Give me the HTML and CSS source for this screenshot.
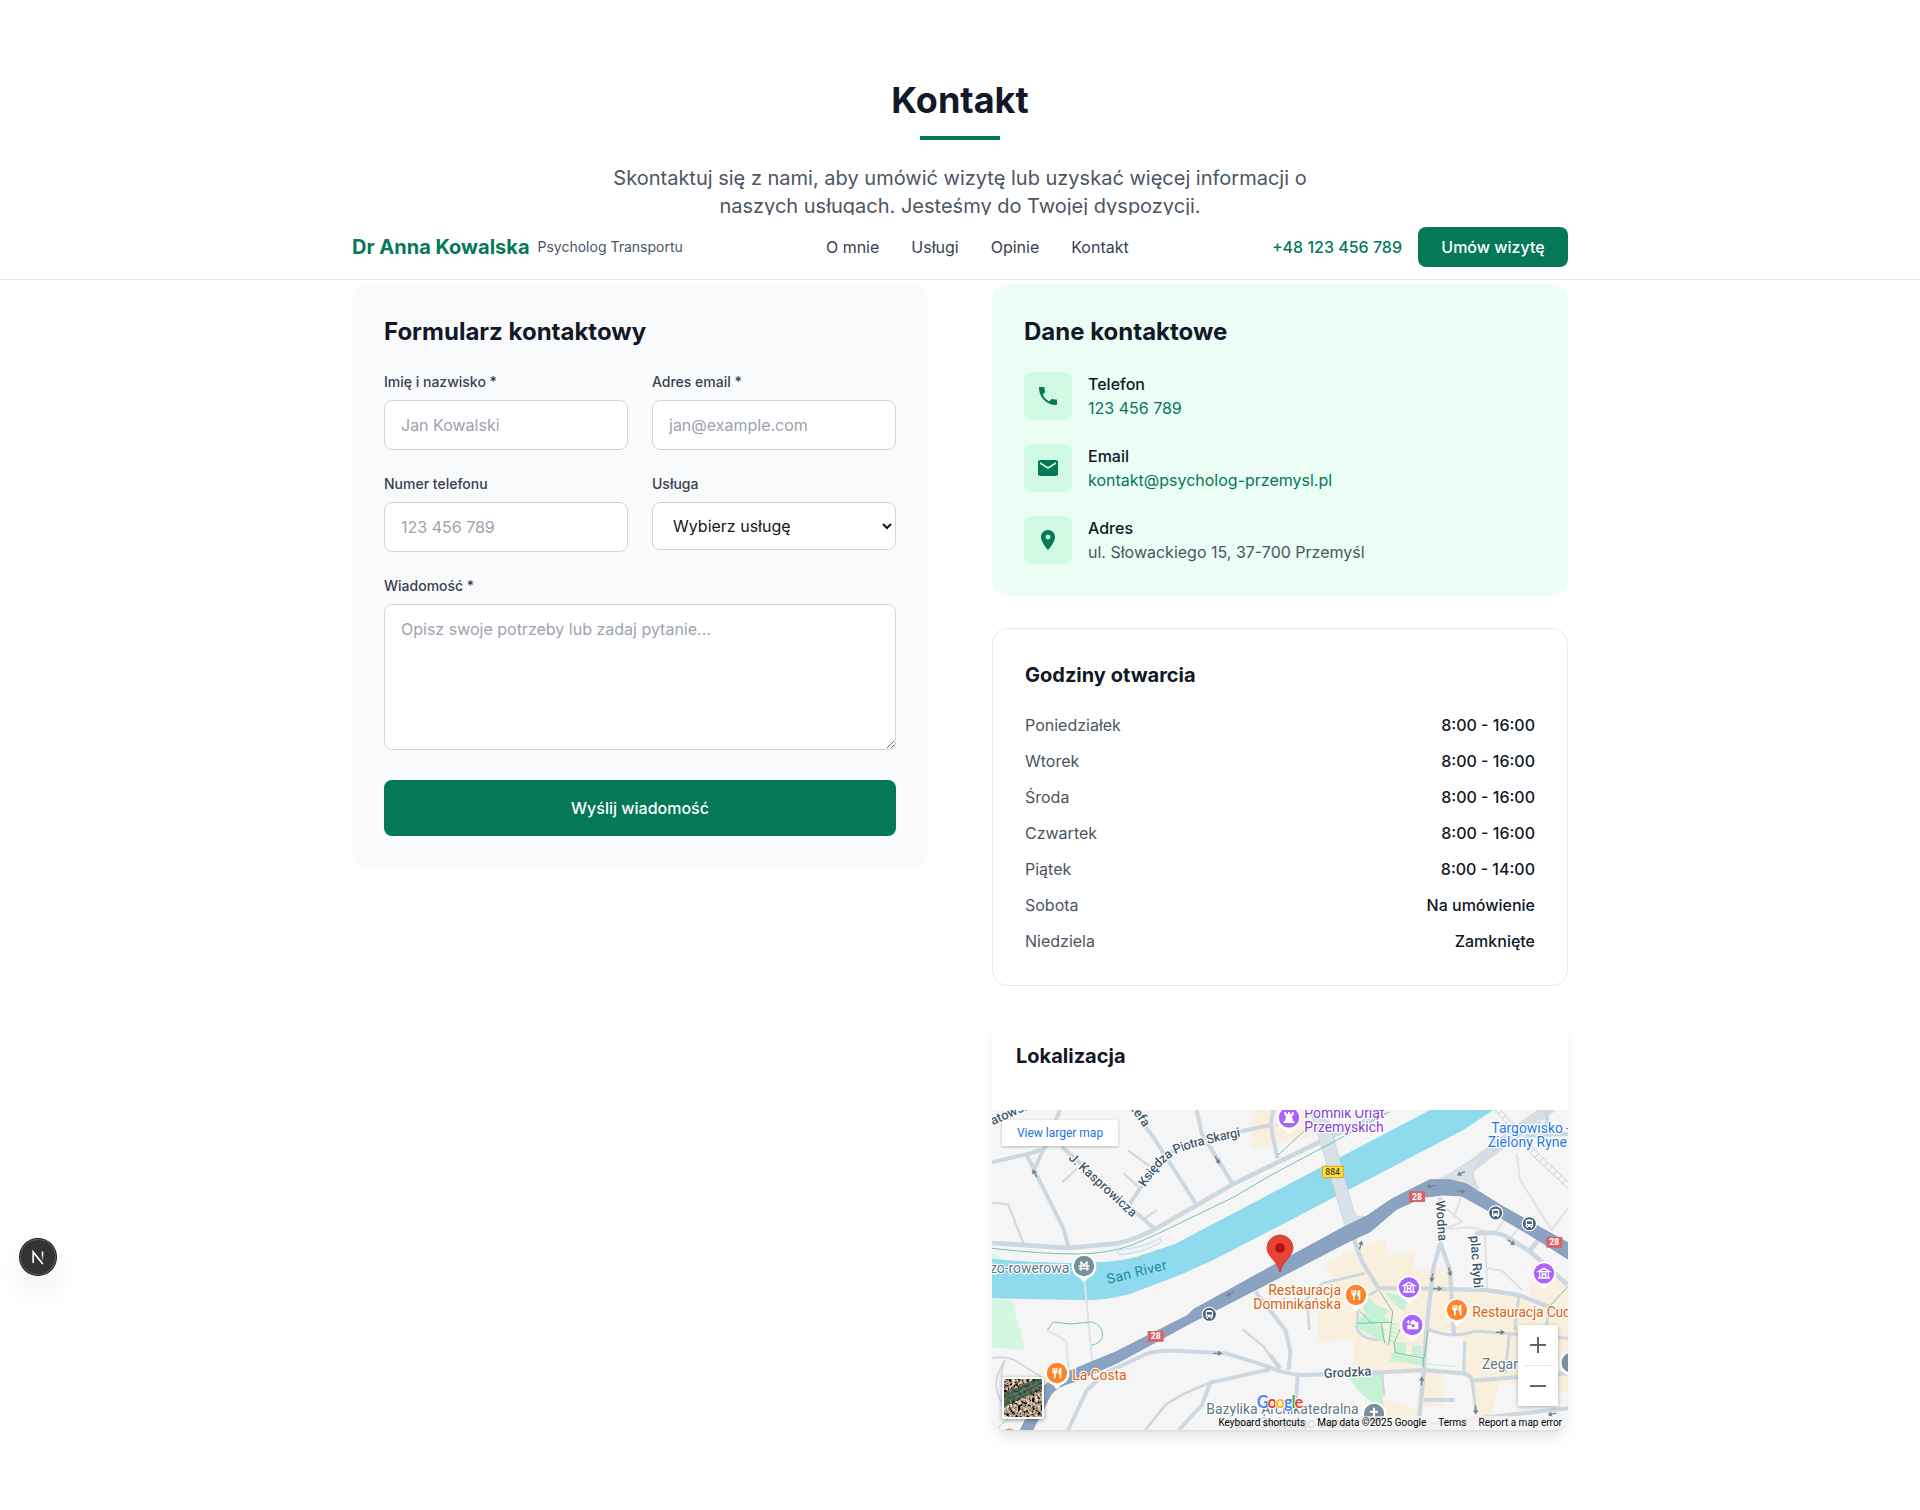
FILE: index.html
```html
<!DOCTYPE html>
<html lang="pl">
<head>
<meta charset="utf-8">
<title>Kontakt – Dr Anna Kowalska</title>
<link rel="stylesheet" href="styles.css">
</head>
<body>
<header class="site-header">
  <div class="header-inner">
    <div class="brand"><span class="brand-name">Dr Anna Kowalska</span><span class="brand-role">Psycholog Transportu</span></div>
    <nav class="nav"><a>O mnie</a><a>Usługi</a><a>Opinie</a><a>Kontakt</a></nav>
    <div class="header-cta"><a class="header-phone">+48 123 456 789</a><a class="header-button">Umów wizytę</a></div>
  </div>
</header>

<main class="contact">
  <div class="intro">
    <h2>Kontakt</h2>
    <div class="intro-rule"></div>
    <p>Skontaktuj się z nami, aby umówić wizytę lub uzyskać więcej informacji o naszych usługach. Jesteśmy do Twojej dyspozycji.</p>
  </div>

  <div class="columns">
    <form class="form-card">
      <h3>Formularz kontaktowy</h3>
      <div class="form-grid">
        <label class="field"><span>Imię i nazwisko *</span><input type="text" placeholder="Jan Kowalski"></label>
        <label class="field"><span>Adres email *</span><input type="email" placeholder="jan@example.com"></label>
        <label class="field"><span>Numer telefonu</span><input type="tel" placeholder="123 456 789"></label>
        <label class="field"><span>Usługa</span><select><option>Wybierz usługę</option></select></label>
        <label class="field field-wide"><span>Wiadomość *</span><textarea rows="5" placeholder="Opisz swoje potrzeby lub zadaj pytanie..."></textarea></label>
      </div>
      <button type="button" class="submit">Wyślij wiadomość</button>
    </form>

    <div class="side">
      <section class="info-card">
        <h3>Dane kontaktowe</h3>
        <div class="info-list">
          <div class="info-row">
            <div class="info-icon"><svg viewBox="0 0 24 24"><path d="M6.62 10.79c1.44 2.83 3.76 5.14 6.59 6.59l2.2-2.2c.27-.27.67-.36 1.02-.24 1.12.37 2.33.57 3.57.57.55 0 1 .45 1 1V20c0 .55-.45 1-1 1-9.39 0-17-7.61-17-17 0-.55.45-1 1-1h3.5c.55 0 1 .45 1 1 0 1.25.2 2.45.57 3.57.11.35.03.74-.25 1.02l-2.2 2.2z"/></svg></div>
            <div><p class="info-label">Telefon</p><p class="info-link">123 456 789</p></div>
          </div>
          <div class="info-row">
            <div class="info-icon"><svg viewBox="0 0 24 24"><path d="M20 4H4c-1.1 0-1.99.9-1.99 2L2 18c0 1.1.9 2 2 2h16c1.1 0 2-.9 2-2V6c0-1.1-.9-2-2-2zm0 4l-8 5-8-5V6l8 5 8-5v2z"/></svg></div>
            <div><p class="info-label">Email</p><p class="info-link">kontakt@psycholog-przemysl.pl</p></div>
          </div>
          <div class="info-row">
            <div class="info-icon"><svg viewBox="0 0 24 24"><path d="M12 2C8.13 2 5 5.13 5 9c0 5.25 7 13 7 13s7-7.75 7-13c0-3.87-3.13-7-7-7zm0 9.5a2.5 2.5 0 0 1 0-5 2.5 2.5 0 0 1 0 5z"/></svg></div>
            <div><p class="info-label">Adres</p><p class="info-text">ul. Słowackiego 15, 37-700 Przemyśl</p></div>
          </div>
        </div>
      </section>

      <section class="hours-card">
        <h4>Godziny otwarcia</h4>
        <dl class="hours">
          <div><dt>Poniedziałek</dt><dd>8:00 - 16:00</dd></div>
          <div><dt>Wtorek</dt><dd>8:00 - 16:00</dd></div>
          <div><dt>Środa</dt><dd>8:00 - 16:00</dd></div>
          <div><dt>Czwartek</dt><dd>8:00 - 16:00</dd></div>
          <div><dt>Piątek</dt><dd>8:00 - 14:00</dd></div>
          <div><dt>Sobota</dt><dd>Na umówienie</dd></div>
          <div><dt>Niedziela</dt><dd>Zamknięte</dd></div>
        </dl>
      </section>

      <section class="map-card">
        <h4>Lokalizacja</h4>
        <div class="map">
          <svg class="map-canvas" viewBox="0 0 1728 960">
            <defs>
              <g id="pin-base"><path d="M0 48c-5 0-7-6-11-11A37 37 0 1 1 11 37C7 42 5 48 0 48z" fill="#fff"/></g>
              <g id="fork" fill="#fff"><path d="M-14-15h3.500v9h2v-9h4v9h2v-9h3.500V-4q0 5-5 6v14h-5V2q-5-1-5-6z"/><path d="M13-16v32H8V4H4V-6q0-9 9-10z"/></g>
              <g id="museum" fill="none" stroke="#fff" stroke-width="4"><path d="M-17-5L0-15 17-5zM-13-3v16M13-3v16M-18 14h36M-5 12V0l5 5 5-5v12"/></g>
              <g id="bus"><circle r="23" fill="#fff"/><circle r="19.500" fill="#4a6275"/><path d="M-11-8q0-5 11-5t11 5V9H8v4H4V9h-8v4h-4V9h-3z" fill="#fff"/><path d="M-7.500-7h15v8h-15z" fill="#4a6275"/><path d="M-7 4h3v3h-3zM4 4h3v3H4z" fill="#4a6275"/></g>
              <path id="arrow" d="M-13-2H1v-6L14 0 1 8V2h-14z" fill="#75828e"/>
              <path id="skargi" d="M460 233Q503 160 552 132Q600 108 790 70"/>
            </defs>
            <rect width="1728" height="960" fill="#f5f5f5"/>
            <!-- built-up blocks -->
            <g fill="#f8efdd">
              <path d="M784 0H950L965 80 834 105 776 118z"/>
              <g transform="translate(834 0)">
                <path d="M160 460L345 382 355 435 430 427V475L530 478 555 540 740 562 830 598 894 605V850L690 815 660 930 600 960H340L330 900 250 790 248 770 255 690 140 697 150 560 190 515z"/>
                <path d="M785 515L894 500V600L830 590 778 560z"/>
              </g>
            </g>
            <g fill="#f5f5f5" transform="translate(834 0)"><path d="M480 672L550 660 585 695 578 782 470 772zM335 795L455 790 440 895 350 870zM520 792L598 802 608 890 520 885zM460 890L600 885 640 925 450 940z"/></g>
            <!-- green areas -->
            <g fill="#d3f8e2"><path d="M0 568L60 568 99 718 0 713z"/><path d="M0 432q25 2 28 18H0z"/></g>
            <g fill="#c5f1d6">
              <path d="M1110 575L1135 565Q1150 590 1190 600L1178 622 1196 636 1155 640 1180 660 1170 675 1183 697 1160 690 1098 655V630L1120 612z"/><path d="M1180 548Q1226 548 1245 575L1236 603Q1200 580 1180 548z"/>
              <path d="M1212 695L1244 700 1240 735 1206 728zM1262 705L1290 708 1290 740 1258 735zM1200 728L1296 750V768L1196 748zM1072 805L1168 790 1174 890Q1120 880 1072 805z"/>
            </g>
            <path d="M1192 752L1390 770" fill="none" stroke="#c5f1d6" stroke-width="4"/>
            <path d="M1208 640l-12 60" fill="none" stroke="#c5f1d6" stroke-width="20" stroke-dasharray="7 5"/>
            <!-- river -->
            <path d="M0 447Q200 464 294 457Q390 454 434 440L549 402 834 252 1314 0H1504L1414 60 834 362 664 450 564 495 414 552Q330 574 264 570L0 565z" fill="#90daed"/>
            <!-- footways and railway -->
            <g fill="none" stroke="#dfe1e4" stroke-width="6">
              <path d="M277 510L302 767M165 660L222 693 230 780M1574 130L1584 210 1679 360L1728 295M1362 295L1410 335 1360 357 1440 352 1500 372M1385 325L1408 260M1478 365L1486 535M1486 475L1530 482 1590 540M1505 375L1535 330M1555 385L1590 340M1535 330L1640 390M874 20L840 60"/>
              <path d="M1505 -5L1630 145 1728 235M1518 -10L1642 133 1728 215" stroke="#cfd3d8" stroke-width="3"/>
              <path d="M1511 -10L1636 139 1728 225" stroke="#cfd3d8" stroke-width="16" stroke-dasharray="3 16"/>
            </g>
            <!-- streets -->
            <g fill="none" stroke="#cdd7e0" stroke-width="12" stroke-linejoin="round">
              <path d="M0 157L114 130 154 118 190 80M204 0L165 95 126 180M104 135L214 355 229 410M209 110L489 358"/>
              <path d="M0 399L229 414 379 400Q440 385 494 355L724 222 974 100 1180 5" stroke-width="14"/>
              <path d="M419 0L480 75 614 285M614 0L629 70 721 220M414 280L454 220 524 135 564 110 764 60 839 45M844 0L836 45 856 145"/>
              <path d="M409 122L474 170M394 190L439 230M211 217L256 175M494 300L455 328M0 278L49 283 94 400" stroke-width="6"/>
              <path d="M0 745Q30 738 64 748L155 805M38 750Q10 800 12 830 18 870 40 890M38 750L28 790 40 860" stroke-width="5"/>
              <path d="M752 658L815 710 860 775" stroke-width="7"/>
              <path d="M790 545L880 660 895 725 890 780M834 735L865 775"/>
              <path d="M228 960L285 840 340 790 462 732Q500 720 560 723L700 730Q740 740 834 772 870 790 930 795L1120 790 1290 780 1410 790Q1438 795 1440 812L1728 790"/>
              <path d="M460 960L520 885Q570 850 650 820" stroke-width="8"/>
              <path d="M560 960L630 885 655 818 834 778M917 795L912 870M1295 870H1388M1290 945L1500 920 1728 895"/>
              <path d="M1170 790L1176 855" stroke-width="7"/>
              <path d="M1085 385L1110 455 1160 535 1280 535 1480 540 1580 555 1670 590 1728 610" stroke-width="13"/>
              <path d="M1160 540L1100 570 1094 650Q1100 685 1160 690M1118 490L990 520 945 565 952 660" stroke-width="8"/>
              <path d="M1345 262V400L1325 470 1304 650 1292 820 1278 960M1345 400L1374 480 1386 675" stroke-width="13"/>
              <path d="M1304 655Q1380 690 1450 663L1728 685M1418 695L1415 790M1552 670L1540 790M1580 560L1568 660M1670 590L1664 650M1440 810L1452 905" stroke-width="9"/>
              <path d="M1450 372Q1520 360 1550 385L1615 425 1728 525M1615 420L1640 390" stroke-width="14"/>
              <path d="M1380 205L1450 160 1600 45 1680 -10" stroke-width="34" stroke="#d5dde5"/>
              <path d="M1728 72L1600 78M1665 0V60"/>
            </g>
            <path d="M950 -10L978 75 1060 350 1085 345 1128 320 1094 318 1084 300 1000 -10z" fill="#d8e0e8" stroke="#c2cdd7" stroke-width="2"/>
            <path d="M1330 210L1440 160 1480 120Q1440 168 1445 200L1465 240 1400 225z" fill="#d8e0e8"/>
            <path d="M1455 235Q1438 200 1446 180 1465 145 1520 112" fill="none" stroke="#c2cdd7" stroke-width="2"/>
            <!-- national road 28 -->
            <g stroke="#718eb5" stroke-width="2" fill="#8ba3c1" stroke-linejoin="round">
              <path d="M82 965L150 835Q185 795 230 784L370 726 585 617 605 598 864 455 1054 352 1124 318 1199 267 1314 209 1374 209 1424 222 1534 290 1740 405V455L1614 375 1524 322 1409 258 1354 255 1294 262 1214 298 1134 366 1074 393 864 502 640 617 595 640 378 758 245 816Q195 828 176 855L120 965z"/>
            </g>
            <!-- cycle and foot paths -->
            <g fill="none" stroke="#72c5a5" stroke-width="3">
              <path d="M0 415Q160 433 264 432 350 430 420 405L500 370 724 262 834 197 1194 5M858 135L940 60M166 660L184 636 234 642 300 636Q330 645 332 675 330 700 298 706"/>
              <path d="M1164 545L1202 605 1190 705M1096 640L1200 637M1105 605L1140 640M1168 640L1178 700M1225 655L1206 700 1210 728 1296 745 1308 660M1294 745V770M1728 530L1670 592"/>
              <path d="M20 950L90 890" stroke-dasharray="8 6"/>
            </g>
            <path d="M376 420Q450 415 506 384L508 396Q450 432 380 434z" fill="#edf3fa" stroke="#ccd7e3" stroke-width="3"/>
            <!-- one-way arrows -->
            <use href="#arrow" transform="translate(128 190) rotate(-120)"/><use href="#arrow" transform="translate(676 150) rotate(58)"/>
            <use href="#arrow" transform="translate(714 552) rotate(152)"/><use href="#arrow" transform="translate(677 730)"/>
            <use href="#arrow" transform="translate(1407 190) rotate(152)"/><use href="#arrow" transform="translate(1317 228) rotate(170)"/>
            <use href="#arrow" transform="translate(1408 244) rotate(8)"/><use href="#arrow" transform="translate(1558 397) rotate(35)"/>
            <use href="#arrow" transform="translate(1106 405) rotate(-75)"/><use href="#arrow" transform="translate(1320 503) rotate(98)"/>
            <use href="#arrow" transform="translate(1373 485) rotate(75)"/><use href="#arrow" transform="translate(1337 536)"/>
            <use href="#arrow" transform="translate(1525 667)"/><use href="#arrow" transform="translate(1289 813) rotate(-88)"/>
            <use href="#arrow" transform="translate(1451 900) rotate(88)"/><use href="#arrow" transform="translate(1680 912) rotate(168)"/>
            <!-- shields -->
            <g class="shield">
              <path d="M1251 244h48v32h-48zM1663 381h48v32h-48zM467 663h48v32h-48z" fill="#da6262"/>
              <text x="1275" y="269">28</text><text x="1687" y="406">28</text><text x="491" y="688">28</text>
              <path d="M991 169h63v34h-63z" fill="#fddc43" stroke="#d5ac13" stroke-width="3"/><text class="dark" x="1022" y="195">884</text>
            </g>
            <use href="#bus" x="1511" y="309"/><use href="#bus" x="1612" y="341"/><use href="#bus" x="652" y="613"/>
            <!-- labels -->
            <g class="street">
              <text transform="translate(227 146) rotate(42.500)" textLength="262">J. Kasprowicza</text>
              <text textLength="340"><textPath href="#skargi" textLength="340">Księdza Piotra Skargi</textPath></text>
              <text transform="translate(412 -8) rotate(55)">zefa</text>
              <text transform="translate(2 46) rotate(-24)">atowska</text>
              <text transform="translate(1331 272) rotate(86)" textLength="122">Wodna</text>
              <text transform="translate(1435 378) rotate(86)" textLength="157">plac Rybi</text>
              <text transform="translate(996 804) rotate(-3)" textLength="143">Grodzka</text>
            </g>
            <g class="poi">
              <text x="-6" y="488" class="slate" textLength="238">zo-rowerowa</text>
              <text transform="translate(348 522) rotate(-14)" class="water" textLength="184">San River</text>
              <text x="937" y="24" class="purple" textLength="240">Pomnik Orląt</text><text x="937" y="66" class="purple" textLength="238">Przemyskich</text>
              <text x="1498" y="69" class="blue" textLength="215">Targowisko</text><text x="1487" y="111" class="blue" textLength="238">Zielony Ryne</text><text x="1722" y="69" class="blue">-</text>
              <text x="1047" y="555" class="food end" textLength="218">Restauracja</text><text x="1047" y="597" class="food end" textLength="263">Dominikańska</text>
              <text x="1441" y="621" class="food" textLength="318">Restauracja Cuda</text>
              <text x="241" y="810" class="food" textLength="163">La Costa</text>
              <text x="1470" y="777" class="slate">Zegar</text>
              <text x="643" y="912" class="slate" textLength="457">Bazylika Archikatedralna</text>
              <text x="730" y="954" class="slate" textLength="370">pw. Świętego Jana...</text>
            </g>
            <!-- places -->
            <g transform="translate(891 23)"><use href="#pin-base"/><circle r="30.500" fill="#ac63fb"/><path d="M-14-17h6v6h5v-6h6v6h5v-6h6v9l-5 3 3 15h4v6h-32v-6h4l3-15-5-3z" fill="#fff"/></g>
            <g transform="translate(276 468)"><use href="#pin-base"/><circle r="30.500" fill="#78909c"/><path d="M-16 8h32M-16 0h32M-9-14V14M9-14V14M-9-12L0-3 9-12" fill="none" stroke="#fff" stroke-width="4"/></g>
            <g transform="translate(1092 555)"><use href="#pin-base"/><circle r="30.500" fill="#ff8328"/><use href="#fork"/></g>
            <g transform="translate(1395 600)"><use href="#pin-base"/><circle r="30.500" fill="#ff8328"/><use href="#fork"/></g>
            <g transform="translate(195 789)"><use href="#pin-base"/><circle r="30.500" fill="#ff8328"/><use href="#fork"/></g>
            <g transform="translate(51 986)"><use href="#pin-base"/><circle r="30.500" fill="#ff8328"/></g>
            <g transform="translate(1251 532)"><use href="#pin-base"/><circle r="30.500" fill="#ac63fb"/><use href="#museum"/></g>
            <g transform="translate(1656 490)"><use href="#pin-base"/><circle r="30.500" fill="#ac63fb"/><use href="#museum"/></g>
            <g transform="translate(1261 645)"><use href="#pin-base"/><circle r="30.500" fill="#ac63fb"/><path d="M-15 0V13h33V-9h-8l-3-5h-8l-3 5h-1v9z" fill="#fff"/><path d="M-18-9h12M-12-15v12" stroke="#fff" stroke-width="3"/><circle cx="2" cy="2" r="5" fill="#ac63fb"/></g>
            <g transform="translate(1146 912)"><use href="#pin-base"/><circle r="30.500" fill="#78909c"/><path d="M0-19V17M-12-7h24" stroke="#fff" stroke-width="6"/></g>
            <g transform="translate(1739 758)"><use href="#pin-base"/><circle r="30.500" fill="#78909c"/></g>
            <path d="M864 486C857 453 825 440 825 414a39 39 0 0 1 78 0C903 440 871 453 864 486z" fill="#ea4335" stroke="#c5221f" stroke-width="2"/><circle cx="864" cy="414" r="15" fill="#b31412"/>
            <text class="google" x="794" y="894" textLength="140"><tspan fill="#4285f4">G</tspan><tspan fill="#ea4335">o</tspan><tspan fill="#fbbc04">o</tspan><tspan fill="#4285f4">g</tspan><tspan fill="#34a853">l</tspan><tspan fill="#ea4335">e</tspan></text>
          </svg>
          <a class="map-larger">View larger map</a>
          <svg class="map-satellite" viewBox="0 0 38 38">
            <defs><filter id="ground" x="0" y="0" width="1" height="1"><feTurbulence type="fractalNoise" baseFrequency=".35" numOctaves="3" seed="4"/><feColorMatrix values="2.2 0 0 0 -.72  1.9 .2 0 0 -.76  1.7 .2 0 0 -.72  0 0 0 0 1"/></filter></defs>
            <rect width="38" height="38" filter="url(#ground)"/>
            <path d="M0 14L38-3V10L0 28z" fill="#2f5440" opacity=".8"/><path d="M0 20L38 2M0 25L38 6" stroke="#769477" stroke-width="1" opacity=".6"/>
          </svg>
          <div class="map-zoom">
            <svg viewBox="0 0 40 40"><path d="M12 20h16M20 12v16"/></svg>
            <svg viewBox="0 0 40 40"><path d="M12 20h16"/></svg>
          </div>
          <div class="map-legal"><span>Keyboard shortcuts</span><span>Map data ©2025 Google</span><span>Terms</span><span>Report a map error</span></div>
        </div>
      </section>
    </div>
  </div>
</main>

<div class="dev-badge"><svg viewBox="0 0 36 36"><defs><linearGradient id="fade" x1="0" y1="0" x2="0" y2="1"><stop offset=".3" stop-color="#fff"/><stop offset="1" stop-color="#fff" stop-opacity="0"/></linearGradient></defs><path d="M13.200 24V13L22.800 25" fill="none" stroke="#fff" stroke-width="1.700"/><rect x="21.700" y="12.500" width="1.600" height="9.500" fill="url(#fade)"/></svg></div>
</body>
</html>
```
FILE: styles.css
```css
* { box-sizing: border-box; margin: 0; padding: 0; }
body { font-family: Inter, "Liberation Sans", sans-serif; font-size: 16px; line-height: 24px; color: #171717; background: #fff; }
h2, h3, h4 { color: #111827; font-weight: 700; }

.site-header { position: absolute; top: 215px; left: 0; right: 0; z-index: 5; height: 65px; background: #fff; border-bottom: 1px solid #e5e7eb; }
.header-inner { max-width: 1216px; height: 64px; margin: 0 auto; display: flex; align-items: center; justify-content: space-between; }
.brand { display: flex; align-items: center; gap: 8px; }
.brand-name { font-size: 20px; line-height: 28px; font-weight: 700; color: #047857; }
.brand-role { font-size: 14px; line-height: 20px; color: #4b5563; }
.nav { display: flex; gap: 32px; color: #374151; }
.header-cta { display: flex; align-items: center; gap: 16px; }
.header-phone { font-weight: 500; color: #047857; }
.header-button { width: 150px; height: 40px; border-radius: 8px; background: #047857; color: #fff; font-weight: 500; line-height: 40px; text-align: center; }

.contact { padding: 80px 0; max-width: 1216px; margin: 0 auto; }
.intro { text-align: center; margin-bottom: 64px; }
.intro h2 { font-size: 36px; line-height: 40px; }
.intro-rule { width: 80px; height: 4px; margin: 16px auto 24px; background: #047857; }
.intro p { max-width: 768px; margin: 0 auto; font-size: 20px; line-height: 28px; color: #4b5563; }
.columns { display: grid; grid-template-columns: 1fr 1fr; gap: 64px; align-items: start; }
h3 { font-size: 24px; line-height: 32px; margin-bottom: 24px; }
h4 { font-size: 20px; line-height: 28px; }

.form-card { padding: 32px; border-radius: 16px; background: #f9fafb; }
.form-grid { display: grid; grid-template-columns: 1fr 1fr; gap: 24px; }
.field { display: block; }
.field span { display: block; margin-bottom: 8px; font-size: 14px; line-height: 20px; font-weight: 500; color: #374151; }
.field-wide { grid-column: span 2; }
input, select, textarea { display: block; width: 100%; padding: 12px 16px; border: 1px solid #d1d5db; border-radius: 8px; background: #fff; font: inherit; color: #171717; }
input { height: 50px; }
select { height: 48px; }
textarea { height: 146px; }
::placeholder { color: #9ca3af; opacity: 1; }
.submit { display: block; width: 100%; height: 56px; margin-top: 30px; border: 0; border-radius: 8px; background: #047857; color: #fff; font: inherit; font-weight: 500; }

.side { display: flex; flex-direction: column; gap: 32px; }
.info-card { padding: 32px; border-radius: 16px; background: #ecfdf5; }
.info-list { display: flex; flex-direction: column; gap: 24px; }
.info-row { display: flex; gap: 16px; }
.info-icon { width: 48px; height: 48px; border-radius: 8px; background: #d1fae5; display: flex; align-items: center; justify-content: center; }
.info-icon svg { width: 24px; height: 24px; fill: #047857; }
.info-label { font-weight: 500; color: #111827; }
.info-link { color: #047857; }
.info-text { color: #4b5563; }
.hours-card { padding: 32px; border: 1px solid #e5e7eb; border-radius: 16px; }
.hours { display: flex; flex-direction: column; gap: 12px; margin-top: 24px; }
.hours div { display: flex; justify-content: space-between; }
.hours dt { color: #4b5563; }
.hours dd { font-weight: 500; color: #111827; }

.map-card { border-radius: 16px; overflow: hidden; background: #fff; box-shadow: 0 10px 15px -3px rgba(0,0,0,.1), 0 4px 6px -4px rgba(0,0,0,.1); }
.map-card h4 { padding: 24px 24px 40px; }
.map { position: relative; height: 320px; font-family: Roboto, Arial, sans-serif; overflow: hidden; }
.map-canvas { display: block; width: 576px; height: 320px; }
.map-canvas text { paint-order: stroke; stroke: #fff; stroke-width: 7px; stroke-linejoin: round; }
.street text { font-size: 39px; font-weight: 500; fill: #43596c; }
.poi text { font-size: 42px; }
.poi .end { text-anchor: end; }
.poi .food { fill: #d9600c; }
.poi .slate { fill: #5d7887; }
.poi .purple { fill: #8440d8; }
.poi .blue { fill: #1f78e6; }
.poi .water { fill: #1b8ba0; stroke: none; }
.shield text { font-size: 26px; font-weight: 700; text-anchor: middle; fill: #fff; stroke: none; }
.shield .dark { font-weight: 500; fill: #4d4104; }
.map-canvas .google { font-family: Lato, Roboto, sans-serif; font-size: 49px; font-weight: 700; stroke-width: 5px; }
.map-larger { position: absolute; left: 10px; top: 10px; width: 116px; height: 26px; background: #fff; border-radius: 2px; box-shadow: 0 1px 3px rgba(0,0,0,.25); font-size: 12px; line-height: 26px; text-align: center; color: #1a73e8; }
.map-satellite { position: absolute; left: 10px; top: 267px; width: 42px; height: 42px; border: 2px solid #fff; border-radius: 2px; box-shadow: 0 1px 4px rgba(0,0,0,.4); background: #555; }
.map-zoom { position: absolute; left: 526px; top: 215px; width: 40px; height: 81px; background: linear-gradient(#e6e6e6, #e6e6e6) 5px 40px / 30px 1px no-repeat #fff; box-shadow: 0 1px 4px rgba(0,0,0,.3); display: flex; flex-direction: column; justify-content: space-between; }
.map-zoom svg { width: 40px; height: 40px; stroke: #666; stroke-width: 2; }
.map-legal { position: absolute; right: 0; bottom: 0; height: 14px; padding: 0 6px 0 5px; display: flex; gap: 12.100px; background: rgba(245,245,245,.75); font-size: 10px; line-height: 14px; color: #000; white-space: nowrap; }

.dev-badge { position: absolute; left: 20px; top: 1239px; width: 36px; height: 36px; border-radius: 50%; background: #333; box-shadow: 0 0 0 1px #171717, inset 0 0 0 1px #5c5c5c, 0 16px 32px -8px rgba(0,0,0,.24); }
.dev-badge svg { display: block; width: 36px; height: 36px; }
```
